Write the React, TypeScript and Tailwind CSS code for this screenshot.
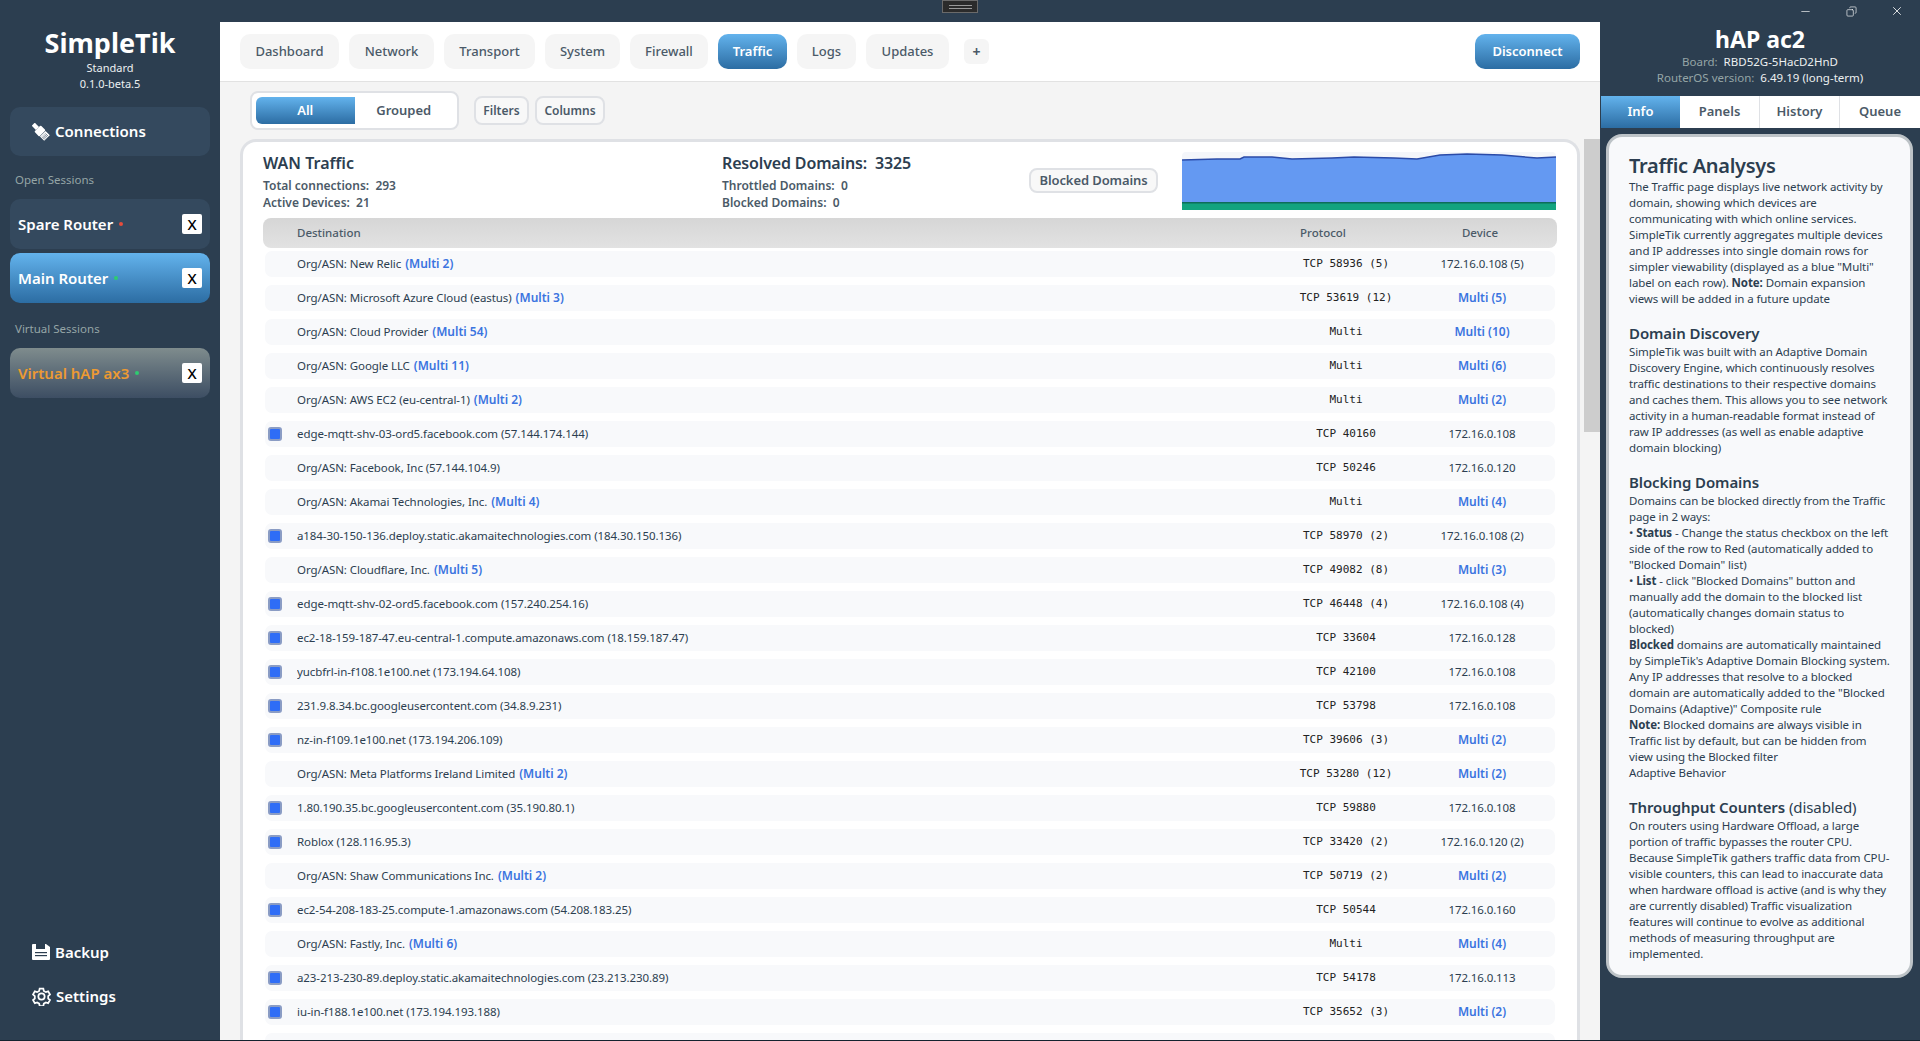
import type { ReactNode } from "react";
import { Minus, X, Copy } from "lucide-react";

type Row = { dest: string; multi?: string; check?: boolean; proto: string; device: string };

const rows: Row[] = [
  { dest: "Org/ASN: New Relic", multi: "(Multi 2)", proto: "TCP 58936 (5)", device: "172.16.0.108 (5)" },
  { dest: "Org/ASN: Microsoft Azure Cloud (eastus)", multi: "(Multi 3)", proto: "TCP 53619 (12)", device: "Multi (5)" },
  { dest: "Org/ASN: Cloud Provider", multi: "(Multi 54)", proto: "Multi", device: "Multi (10)" },
  { dest: "Org/ASN: Google LLC", multi: "(Multi 11)", proto: "Multi", device: "Multi (6)" },
  { dest: "Org/ASN: AWS EC2 (eu-central-1)", multi: "(Multi 2)", proto: "Multi", device: "Multi (2)" },
  { dest: "edge-mqtt-shv-03-ord5.facebook.com (57.144.174.144)", check: true, proto: "TCP 40160", device: "172.16.0.108" },
  { dest: "Org/ASN: Facebook, Inc (57.144.104.9)", proto: "TCP 50246", device: "172.16.0.120" },
  { dest: "Org/ASN: Akamai Technologies, Inc.", multi: "(Multi 4)", proto: "Multi", device: "Multi (4)" },
  { dest: "a184-30-150-136.deploy.static.akamaitechnologies.com (184.30.150.136)", check: true, proto: "TCP 58970 (2)", device: "172.16.0.108 (2)" },
  { dest: "Org/ASN: Cloudflare, Inc.", multi: "(Multi 5)", proto: "TCP 49082 (8)", device: "Multi (3)" },
  { dest: "edge-mqtt-shv-02-ord5.facebook.com (157.240.254.16)", check: true, proto: "TCP 46448 (4)", device: "172.16.0.108 (4)" },
  { dest: "ec2-18-159-187-47.eu-central-1.compute.amazonaws.com (18.159.187.47)", check: true, proto: "TCP 33604", device: "172.16.0.128" },
  { dest: "yucbfrl-in-f108.1e100.net (173.194.64.108)", check: true, proto: "TCP 42100", device: "172.16.0.108" },
  { dest: "231.9.8.34.bc.googleusercontent.com (34.8.9.231)", check: true, proto: "TCP 53798", device: "172.16.0.108" },
  { dest: "nz-in-f109.1e100.net (173.194.206.109)", check: true, proto: "TCP 39606 (3)", device: "Multi (2)" },
  { dest: "Org/ASN: Meta Platforms Ireland Limited", multi: "(Multi 2)", proto: "TCP 53280 (12)", device: "Multi (2)" },
  { dest: "1.80.190.35.bc.googleusercontent.com (35.190.80.1)", check: true, proto: "TCP 59880", device: "172.16.0.108" },
  { dest: "Roblox (128.116.95.3)", check: true, proto: "TCP 33420 (2)", device: "172.16.0.120 (2)" },
  { dest: "Org/ASN: Shaw Communications Inc.", multi: "(Multi 2)", proto: "TCP 50719 (2)", device: "Multi (2)" },
  { dest: "ec2-54-208-183-25.compute-1.amazonaws.com (54.208.183.25)", check: true, proto: "TCP 50544", device: "172.16.0.160" },
  { dest: "Org/ASN: Fastly, Inc.", multi: "(Multi 6)", proto: "Multi", device: "Multi (4)" },
  { dest: "a23-213-230-89.deploy.static.akamaitechnologies.com (23.213.230.89)", check: true, proto: "TCP 54178", device: "172.16.0.113" },
  { dest: "iu-in-f188.1e100.net (173.194.193.188)", check: true, proto: "TCP 35652 (3)", device: "Multi (2)" },
];

const tabs = [
  { label: "Dashboard", width: "w-[99px]" },
  { label: "Network", width: "w-[85px]" },
  { label: "Transport", width: "w-[91px]" },
  { label: "System", width: "w-[75px]" },
  { label: "Firewall", width: "w-[78px]" },
  { label: "Traffic", width: "w-[69px]" },
  { label: "Logs", width: "w-[59px]" },
  { label: "Updates", width: "w-[83px]" },
];

function SessionCard({ name, dot, variant }: { name: string; dot: string; variant: "plain" | "active" | "virtual" }) {
  const bg =
    variant === "active"
      ? "bg-gradient-to-b from-[#63b3ed] to-[#2c6da3] text-white"
      : variant === "virtual"
        ? "bg-gradient-to-b from-[#7f8c8d] to-[#3d4e63] text-[#ed9a32]"
        : "bg-[#34495e] text-white";
  return (
    <div className={`flex h-[50px] items-center justify-between rounded-[10px] pl-2 pr-2 ${bg}`}>
      <div className="flex items-center text-[15px] font-semibold">
        {name}
        <span className={`ml-[6px] h-[4px] w-[4px] rounded-full ${dot}`} />
      </div>
      <div className="flex h-5 w-5 items-center justify-center rounded-[2px] bg-white text-[15px] font-medium text-black">X</div>
    </div>
  );
}

function Sidebar() {
  return (
    <aside className="flex w-[220px] shrink-0 flex-col px-[10px] pb-[33px] pt-[26px] text-white">
      <div className="text-center text-[27px] font-bold leading-[34px]">SimpleTik</div>
      <div className="text-center text-[11px] leading-4 text-[#ecf0f1]">Standard</div>
      <div className="text-center text-[11px] leading-4 text-[#ecf0f1]">0.1.0-beta.5</div>
      <div className="mt-[15px] flex h-[49px] items-center gap-[5px] rounded-[10px] bg-[#34495e] pl-[22px] text-[15px] font-semibold">
        <svg width="18" height="18" viewBox="0 0 18 18" fill="white">
          <g transform="rotate(-45 9 9)">
            <rect x="6.8" y="-2" width="4.4" height="6" />
            <rect x="4.5" y="4" width="9" height="7" rx="1" />
            <rect x="5" y="11.5" width="8" height="6" />
            <path d="M6.5 13v4M8 13v4M9.5 13v4M11 13v4" stroke="#34495e" strokeWidth="0.7" />
          </g>
        </svg>
        Connections
      </div>
      <div className="mt-[16px] pl-[5px] text-[11.5px] leading-[16px] text-[#95a5a6]">Open Sessions</div>
      <div className="mt-[11px] flex flex-col gap-1">
        <SessionCard name="Spare Router" dot="bg-[#e74c3c]" variant="plain" />
        <SessionCard name="Main Router" dot="bg-[#2ecc71]" variant="active" />
      </div>
      <div className="mt-[18px] pl-[5px] text-[11.5px] leading-[16px] text-[#95a5a6]">Virtual Sessions</div>
      <div className="mt-[11px]">
        <SessionCard name="Virtual hAP ax3" dot="bg-[#2ecc71]" variant="virtual" />
      </div>
      <div className="mt-auto flex flex-col gap-[22px] pl-[22px] text-[15px] font-semibold">
        <div className="flex h-[22px] items-center gap-[5px]">
          <svg width="18" height="18" viewBox="0 0 18 18">
            <path d="M0 2 a1 1 0 0 1 1 -1 H14 L18 4 V16 a1 1 0 0 1 -1 1 H1 a1 1 0 0 1 -1 -1 Z" fill="white" />
            <rect x="4" y="1" width="9" height="5" fill="#2c3e50" />
            <rect x="3" y="9" width="12" height="1.2" fill="#2c3e50" />
            <rect x="3" y="12" width="12" height="1.2" fill="#2c3e50" />
          </svg>
          Backup
        </div>
        <div className="flex h-[22px] items-center gap-[5px]">
          <svg width="19" height="19" viewBox="0 0 24 24" fill="none" stroke="white" strokeWidth="2.2">
            <path d="M9.67 2h4.66l.6 3 2.6 1.5 2.9-1 2.33 4-2.3 2v3l2.3 2-2.33 4-2.9-1-2.6 1.5-.6 3H9.67l-.6-3-2.6-1.5-2.9 1-2.33-4 2.3-2v-3l-2.3-2 2.33-4 2.9 1 2.6-1.5z" />
            <circle cx="12" cy="12" r="4" />
          </svg>
          Settings
        </div>
      </div>
    </aside>
  );
}

function TopTabs() {
  return (
    <div className="flex h-[60px] shrink-0 items-center border-b border-[#e2e2e2] bg-white pl-5 pr-5">
      <div className="flex items-center gap-[10px]">
        {tabs.map((t) =>
          t.label === "Traffic" ? (
            <div key={t.label} className={`flex h-[35px] items-center justify-center rounded-[10px] bg-gradient-to-b from-[#63b3ed] to-[#2c6da3] text-[13px] font-semibold text-white ${t.width}`}>
              {t.label}
            </div>
          ) : (
            <div key={t.label} className={`flex h-[35px] items-center justify-center rounded-[10px] bg-[#f5f5f5] text-[13px] font-medium text-[#4b5a68] ${t.width}`}>
              {t.label}
            </div>
          ),
        )}
        <div className="ml-[5px] flex h-[25px] w-[25px] items-center justify-center rounded-[6px] bg-[#f5f5f5] text-[14px] font-bold text-[#4b5a68]">+</div>
      </div>
      <div className="ml-auto flex h-[35px] w-[105px] items-center justify-center rounded-[10px] bg-gradient-to-b from-[#63b3ed] to-[#2c6da3] text-[13px] font-semibold text-white">
        Disconnect
      </div>
    </div>
  );
}

function FilterRow() {
  return (
    <div className="flex h-[57px] shrink-0 items-center pl-[30px]">
      <div className="flex h-[39px] w-[209px] rounded-[8px] border-[2px] border-[#dfe1e5] bg-white p-[4px]">
        <div className="flex flex-1 items-center justify-center rounded-l-[6px] bg-gradient-to-b from-[#63b3ed] to-[#2c6da3] text-[13px] font-semibold text-white">All</div>
        <div className="flex flex-1 items-center justify-center rounded-r-[6px] bg-white text-[13px] font-semibold text-[#4b5a68]">Grouped</div>
      </div>
      <div className="ml-[15px] flex h-[29px] w-[55px] items-center justify-center rounded-[8px] border-[2px] border-[#dfe1e5] bg-[#f8f8f8] text-[12px] font-semibold text-[#4b5a68]">Filters</div>
      <div className="ml-[6px] flex h-[29px] w-[70px] items-center justify-center rounded-[8px] border-[2px] border-[#dfe1e5] bg-[#f8f8f8] text-[12px] font-semibold text-[#4b5a68]">Columns</div>
    </div>
  );
}

function Sparkline() {
  return (
    <svg className="h-[58px] w-[374px]" viewBox="0 0 374 58" preserveAspectRatio="none">
      <rect width="374" height="58" fill="#f4f6fa" rx="4" />
      <path d="M0 8 L35 7 L58 7 L62 5 L90 5 L110 7 L150 6 L172 5 L212 6 L235 7 L258 3 L285 2 L320 3 L355 6 L374 5 L374 58 L0 58 Z" fill="#6499f2" />
      <path d="M0 8 L35 7 L58 7 L62 5 L90 5 L110 7 L150 6 L172 5 L212 6 L235 7 L258 3 L285 2 L320 3 L355 6 L374 5" fill="none" stroke="#2b4ba8" strokeWidth="1.5" />
      <rect y="50" width="374" height="8" fill="#12a37f" />
      <rect y="50" width="374" height="1.5" fill="#0d6d5a" />
    </svg>
  );
}

function CardHeader() {
  return (
    <div className="flex h-[76px] shrink-0 text-[#2c3e50]">
      <div className="w-[459px] pt-[11px]">
        <div className="text-[16px] font-semibold leading-5 text-[#2c3e50]">WAN Traffic</div>
        <div className="mt-[4px] text-[12px] font-semibold leading-[17px] text-[#4b5a68]">Total connections:&nbsp; 293</div>
        <div className="text-[12px] font-semibold leading-[17px] text-[#4b5a68]">Active Devices:&nbsp; 21</div>
      </div>
      <div className="w-[307px] pt-[11px]">
        <div className="text-[16px] font-semibold leading-5 tracking-[-0.15px] text-[#2c3e50]">Resolved Domains:&nbsp; 3325</div>
        <div className="mt-[4px] text-[12px] font-semibold leading-[17px] text-[#4b5a68]">Throttled Domains:&nbsp; 0</div>
        <div className="text-[12px] font-semibold leading-[17px] text-[#4b5a68]">Blocked Domains:&nbsp; 0</div>
      </div>
      <div className="mt-[26px] flex h-[25px] w-[129px] items-center justify-center rounded-[8px] border-[2px] border-[#dfe1e5] bg-[#f8f8f8] text-[13px] font-semibold tracking-[-0.1px] text-[#4b5a68]">
        Blocked Domains
      </div>
      <div className="ml-[24px] mt-[10px]">
        <Sparkline />
      </div>
    </div>
  );
}

function TrafficRow({ row }: { row: Row }) {
  const isMulti = row.device.startsWith("Multi");
  return (
    <div className="mx-[2px] flex h-[26px] items-center rounded-[7px] bg-[#f8f9fb] pl-[3px] pr-[18px] text-[11.5px] tracking-[-0.08px] text-[#2c3e50]">
      <div className="w-[29px] shrink-0">
        {row.check && <div className="h-[14px] w-[14px] rounded-[3px] border-[2px] border-[#8a9cc4] bg-[#2f6df6]" />}
      </div>
      <div className="flex-1 truncate">
        {row.dest}
        {row.multi && <span className="ml-1 text-[12px] font-semibold tracking-normal text-[#3b74e0]">{row.multi}</span>}
      </div>
      <div className="w-[110px] text-center font-['DejaVu_Sans_Mono',monospace] text-[11px] tracking-normal text-[#222]">{row.proto}</div>
      <div className={`ml-[26px] w-[110px] text-center ${isMulti ? "text-[12px] font-semibold tracking-normal text-[#3b74e0]" : "tracking-[-0.12px] text-[#2c3e50]"}`}>{row.device}</div>
    </div>
  );
}

function TrafficCard() {
  return (
    <div className="flex min-h-0 flex-1 overflow-hidden pl-[20px]">
      <div className="min-w-0 flex-1 overflow-hidden rounded-t-[16px] border-[3px] border-b-0 border-[#dfe1e5] bg-white px-[20px]">
        <CardHeader />
        <div className="flex h-[30px] items-center rounded-[8px] bg-gradient-to-b from-[#d6d6d6] to-[#e2e2e2] pl-[34px] text-[11.5px] font-medium text-[#4b5a68]">
          <div className="flex-1">Destination</div>
          <div className="w-[110px] text-center">Protocol</div>
          <div className="ml-[47px] mr-[22px] w-[110px] text-center">Device</div>
        </div>
        <div className="mt-[3px] flex flex-col gap-2">
          {rows.map((r) => (
            <TrafficRow key={r.dest} row={r} />
          ))}
          <div className="mx-[2px] h-[26px] rounded-[7px] bg-[#f8f9fb]" />
        </div>
      </div>
      <div className="ml-[4px] w-[16px] shrink-0">
        <div className="h-[293px] w-[16px] bg-[#cdcdcd]" />
      </div>
    </div>
  );
}

function InfoHeading({ children }: { children: ReactNode }) {
  return <div className="mt-[15px] text-[15px] font-semibold leading-[22px] text-[#2c3e50]">{children}</div>;
}

function RightPanel() {
  return (
    <aside className="flex w-[320px] shrink-0 flex-col">
      <div className="flex h-[96px] flex-col items-center pt-[25px] text-white">
        <div className="text-[23px] font-bold leading-[29px]">hAP ac2</div>
        <div className="text-[11.5px] leading-4 text-[#95a5a6]">
          Board:&nbsp; <span className="text-[#ecf0f1]">RBD52G-5HacD2HnD</span>
        </div>
        <div className="text-[11.5px] leading-4 text-[#95a5a6]">
          RouterOS version:&nbsp; <span className="text-[#ecf0f1]">6.49.19 (long-term)</span>
        </div>
      </div>
      <div className="flex h-[32px] pl-[1px]">
        <div className="flex w-[79px] items-center justify-center bg-gradient-to-b from-[#63b3ed] to-[#2c6da3] text-[13px] font-semibold text-white">Info</div>
        <div className="flex w-[80px] items-center justify-center border-r border-[#dfe1e5] bg-white text-[13px] font-semibold text-[#4b5a68]">Panels</div>
        <div className="flex w-[80px] items-center justify-center border-r border-[#dfe1e5] bg-white text-[13px] font-semibold text-[#4b5a68]">History</div>
        <div className="flex flex-1 items-center justify-center bg-white text-[13px] font-semibold text-[#4b5a68]">Queue</div>
      </div>
      <div className="ml-[6px] mr-[7px] mt-[6px] rounded-[16px] border-[3px] border-[#bdc3c7] bg-[#f8f9fb] pb-[13px] pl-[20px] pr-[19px] pt-[16px] text-[11.5px] leading-4 tracking-[-0.09px] text-[#2c3e50]">
        <div className="text-[20px] font-semibold leading-[26px] tracking-[-0.3px]">Traffic Analysys</div>
        <p>
          The Traffic page displays live network activity by domain, showing which devices are communicating with which online services. SimpleTik currently aggregates multiple devices and IP addresses into single domain rows for simpler viewability (displayed as a blue "Multi" label on each row). <b>Note:</b> Domain expansion views will be added in a future update
        </p>
        <InfoHeading>Domain Discovery</InfoHeading>
        <p>
          SimpleTik was built with an Adaptive Domain Discovery Engine, which continuously resolves traffic destinations to their respective domains and caches them. This allows you to see network activity in a human-readable format instead of raw IP addresses (as well as enable adaptive domain blocking)
        </p>
        <InfoHeading>Blocking Domains</InfoHeading>
        <p>Domains can be blocked directly from the Traffic page in 2 ways:</p>
        <p>• <b>Status</b> - Change the status checkbox on the left side of the row to Red (automatically added to "Blocked Domain" list)</p>
        <p>• <b>List</b> - click "Blocked Domains" button and manually add the domain to the blocked list (automatically changes domain status to blocked)</p>
        <p><b>Blocked</b> domains are automatically maintained by SimpleTik's Adaptive Domain Blocking system. Any IP addresses that resolve to a blocked domain are automatically added to the "Blocked Domains (Adaptive)" Composite rule</p>
        <p><b>Note:</b> Blocked domains are always visible in Traffic list by default, but can be hidden from view using the Blocked filter</p>
        <p>Adaptive Behavior</p>
        <InfoHeading>
          Throughput Counters <span className="font-normal">(disabled)</span>
        </InfoHeading>
        <p>
          On routers using Hardware Offload, a large portion of traffic bypasses the router CPU. Because SimpleTik gathers traffic data from CPU-visible counters, this can lead to inaccurate data when hardware offload is active (and is why they are currently disabled) Traffic visualization features will continue to evolve as additional methods of measuring throughput are implemented.
        </p>
      </div>
    </aside>
  );
}

export default function App() {
  return (
    <div className="relative flex h-[1041px] w-[1920px] flex-col overflow-hidden bg-[#2c3e50] font-['Noto_Sans',sans-serif]">
      <div className="absolute left-[942px] top-0 flex h-[13px] w-[36px] flex-col items-center justify-center gap-[2px] border border-[#6a6a6a] bg-[#2b2b2b]">
        <div className="h-px w-[23px] bg-[#999]" />
        <div className="h-px w-[23px] bg-[#999]" />
      </div>
      <div className="absolute right-[16px] top-[4px] flex w-[105px] items-center justify-between text-white">
        <Minus size={13} strokeWidth={1.2} />
        <Copy size={11} strokeWidth={1.4} className="-scale-x-100" />
        <X size={14} strokeWidth={1.4} />
      </div>
      <div className="flex min-h-0 flex-1">
        <Sidebar />
        <div className="flex min-w-0 flex-1 flex-col pt-[22px]">
          <main className="flex min-h-0 flex-1 flex-col bg-[#f4f4f4]">
            <TopTabs />
            <FilterRow />
            <TrafficCard />
          </main>
        </div>
        <RightPanel />
      </div>
      <div className="h-px shrink-0 bg-[#14222f]" />
    </div>
  );
}
